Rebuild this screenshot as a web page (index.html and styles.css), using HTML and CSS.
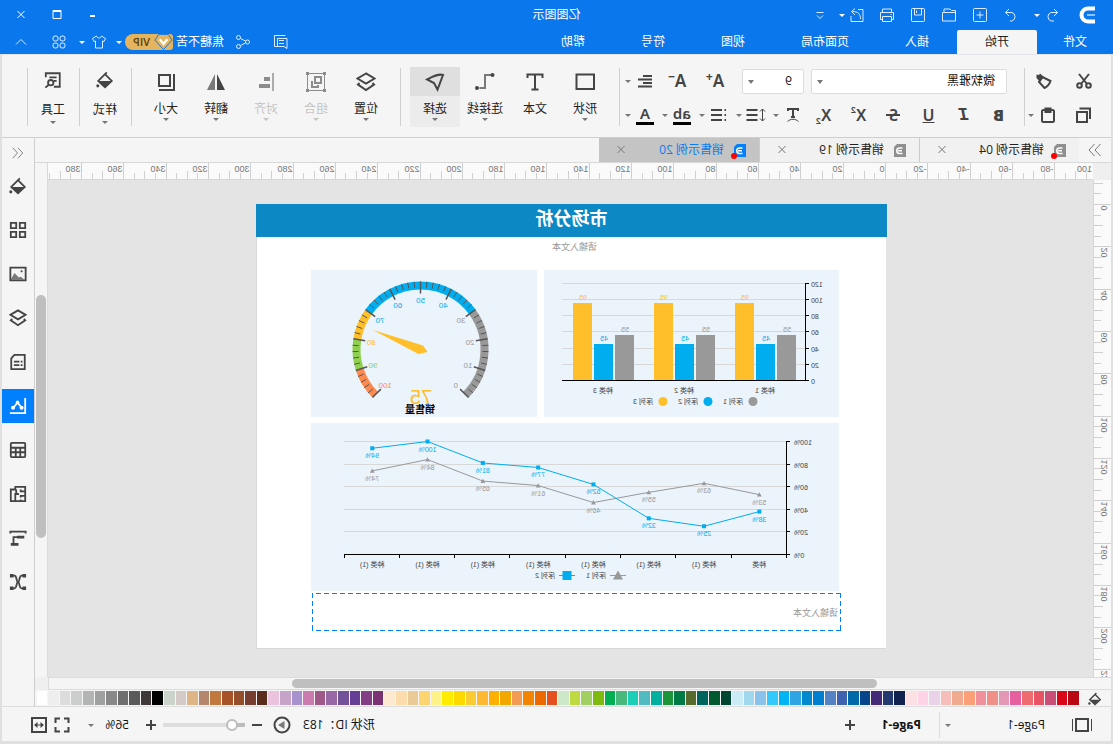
FILE: index.html
```html
<!DOCTYPE html>
<html lang="zh-CN">
<head>
<meta charset="utf-8">
<title>亿图图示</title>
<link rel="stylesheet" href="styles.css">
</head>
<body>
<svg class="sprite" aria-hidden="true">
  <symbol id="i-undo" viewBox="0 0 16 16"><path d="M6 2 2.500 5.500 6 9M2.500 5.500H9a4.500 4.500 0 0 1 0 8.500H6"/></symbol>
  <symbol id="i-redo" viewBox="0 0 16 16"><path d="M10 2l3.500 3.500L10 9M13.500 5.500H7a4.500 4.500 0 0 0 0 8.500h2"/></symbol>
  <symbol id="i-new" viewBox="0 0 16 16"><rect x="1.500" y="1.500" width="13" height="13" rx="1"/><path d="M8 4.500v7M4.500 8h7"/></symbol>
  <symbol id="i-open" viewBox="0 0 16 16"><path d="M1.500 14V3.500h4l1.500-1.500h6v3M1.500 7V5.500h13V14h-13"/></symbol>
  <symbol id="i-save" viewBox="0 0 16 16"><rect x="1.500" y="1.500" width="13" height="13" rx="1"/><path d="M4.500 2v6h7V2M9.500 3.500v2.500"/></symbol>
  <symbol id="i-print" viewBox="0 0 16 16"><path d="M3.500 5V2h9v3M3.500 12.500h-2V5.500h13v7h-2M3.500 9.500h9v5h-9zM3.500 7.500h1"/></symbol>
  <symbol id="i-export" viewBox="0 0 16 16"><path d="M7 2.500H2v12h12V9M4.500 12c0-5 2.500-7.500 8-7.500M10 1.500l3.500 3L10 8"/></symbol>
  <symbol id="i-custom" viewBox="0 0 16 16"><path d="M4.500 5.500h7M5 8.500l3 3 3-3"/></symbol>
  <symbol id="i-min" viewBox="0 0 16 16"><path class="w2" d="M6 9h5"/></symbol>
  <symbol id="i-max" viewBox="0 0 16 16"><path d="M4 3.500h8v8H4z"/><path class="w2" d="M4 4h8"/></symbol>
  <symbol id="i-close" viewBox="0 0 16 16"><path d="m4.500 4 7 7M11.500 4l-7 7"/></symbol>
  <symbol id="i-message" viewBox="0 0 16 16"><path d="M3.500 1.500h11v11H5l-3 2v-10h9.500v8M5 6.500h5M5 9.500h5"/></symbol>
  <symbol id="i-share" viewBox="0 0 16 16"><circle cx="12.500" cy="3.500" r="2"/><circle cx="3.500" cy="8" r="2"/><circle cx="12.500" cy="12.500" r="2"/><path d="m5.500 7 5-2.500M5.500 9l5 2.500"/></symbol>
  <symbol id="i-shirt" viewBox="0 0 16 16"><path d="M5.500 2 1.500 4.500l1.500 3 1.500-.5v7h7V7l1.500.5 1.500-3L10.500 2c-.5 1.500-1.500 2-2.500 2s-2-.5-2.500-2z"/></symbol>
  <symbol id="i-apps" viewBox="0 0 16 16"><rect x="2" y="2" width="5" height="5" rx="2"/><rect x="9" y="2" width="5" height="5" rx="2"/><rect x="2" y="9" width="5" height="5" rx="2"/><rect x="9" y="9" width="5" height="5" rx="2"/></symbol>
  <symbol id="i-up" viewBox="0 0 16 16"><path d="m3 10.500 5-5 5 5"/></symbol>
  <symbol id="i-cut" viewBox="0 0 16 16"><path class="w2" d="m3 1 8 10M13 1 5 11"/><circle class="w2" cx="3.500" cy="12.500" r="2.300"/><circle class="w2" cx="12.500" cy="12.500" r="2.300"/></symbol>
  <symbol id="i-painter" viewBox="0 0 16 16"><path class="w2" d="m1.500 8 8-4 3.500 5-5.500 6c-2-1-5-4-6-7z"/><path class="fill" d="M8 4 12 .500l1 1.500 2.500-.500v3.500L12 9z"/></symbol>
  <symbol id="i-copy" viewBox="0 0 16 16"><path class="w2" d="M5 5h10v10H5z"/><path class="w2" d="M2 12V1.500h10.500"/></symbol>
  <symbol id="i-paste" viewBox="0 0 16 16"><rect class="w2" x="2" y="3" width="12" height="12" rx="1.500"/><rect class="w2" x="5.500" y="1.500" width="5" height="3.500"/></symbol>
  <symbol id="i-align" viewBox="0 0 16 16"><path class="w2" d="M1 3h9M1 6.500h14M1 10h9M1 13.500h14"/></symbol>
  <symbol id="i-textfx" viewBox="0 0 16 16"><path class="w2" d="M3 4V2h10v2M8 2v8M6 10h4"/><path d="M2.500 14.500c3-3 8-3 11 0"/></symbol>
  <symbol id="i-spacing" viewBox="0 0 20 16"><path d="M3.500 2v12M1 4.500l2.500-2.500L6 4.500M1 11.500l2.500 2.500L6 11.500"/><path class="w2" d="M8.500 3h11M8.500 8h11M8.500 13h11"/></symbol>
  <symbol id="i-list" viewBox="0 0 16 16"><path class="w2" d="M5 3h11M5 8h11M5 13h11M1 3h1.500M1 8h1.500M1 13h1.500"/></symbol>
  <symbol id="i-rect" viewBox="0 0 20 20"><path class="w2" d="M1 2.500h17.500V17H1z"/></symbol>
  <symbol id="i-text" viewBox="0 0 20 20"><path class="w2" d="M2.500 6V2.500h15V6M10 2.500v15M6.500 17.500h7"/></symbol>
  <symbol id="i-connector" viewBox="0 0 20 20"><path class="soft w2" d="M4 3h6v13h5.500"/><circle class="fill" cx="2.500" cy="3" r="2"/><circle class="fill" cx="18" cy="16" r="2"/></symbol>
  <symbol id="i-select" viewBox="0 0 20 20"><path class="w2" d="M2 3c5-1.500 10 1.500 16 4.500L11 11 7.500 17.500z"/></symbol>
  <symbol id="i-layers" viewBox="0 0 20 20"><path class="w2" d="m10 1.500 8.500 5-8.500 5-8.500-5z"/><path class="w2" d="M3.500 11 2 12.500l8 5.500 8-5.500-1.500-1.500"/></symbol>
  <symbol id="i-group" viewBox="0 0 20 20"><path d="M1.500 1.500h17v17h-17z"/><path class="fill" d="M0 0h3v3H0zM17 0h3v3h-3zM0 17h3v3H0zM17 17h3v3h-3z"/><path class="w2" d="M5 5h6v6H5z"/><path class="w2" d="M14 9v6H8v-2"/></symbol>
  <symbol id="i-edge" viewBox="0 0 20 20"><path class="soft w2" d="M3 1v18"/><path class="w4" d="M6 7h6M6 14h11"/></symbol>
  <symbol id="i-flip" viewBox="0 0 20 20"><path class="fill" d="M9 2v16H1z"/><path class="softfill" d="M11 2v16h8z"/></symbol>
  <symbol id="i-size" viewBox="0 0 20 20"><path class="w2" d="M6 3h11v11H6z"/><path class="w2" d="M2 2v16h15"/></symbol>
  <symbol id="i-bucket" viewBox="0 0 20 20"><path class="w2" d="m9.500 4-7 7 7.500 7 7.500-7L8 1.500"/><path class="fill" d="M3.500 11h13L10 18z"/><circle class="fill" cx="18" cy="16.500" r="1.700"/></symbol>
  <symbol id="i-tools" viewBox="0 0 20 20"><path class="w2" d="M18 7V2.500H2.500v15H9M6 7h8M6 11h3"/><circle class="w2" cx="12.500" cy="13" r="3"/><path class="w2" d="m15 15.500 3.500 3"/></symbol>
  <symbol id="i-chevrons" viewBox="0 0 16 16"><path d="M7.500 2 2 8l5.500 6M13.500 2 8 8l5.500 6"/></symbol>
  <symbol id="i-chevrons-r" viewBox="0 0 16 16"><path d="M2.500 2 8 8l-5.500 6M8.500 2 14 8l-5.500 6"/></symbol>
  <symbol id="i-grid" viewBox="0 0 20 20"><path class="w2" d="M2 2h6v6H2zM12 2h6v6h-6zM2 12h6v6H2zM12 12h6v6h-6z"/></symbol>
  <symbol id="i-image" viewBox="0 0 20 20"><path class="w2" d="M1.500 3h17v14h-17z"/><path class="softfill" d="m3 16 4-3 2 1 5-5 4 7z"/><path class="fill" d="M5 6h2v2H5z"/></symbol>
  <symbol id="i-doc" viewBox="0 0 20 20"><path class="w2" d="M2.500 2H14l3.500 4v12h-15z"/><path class="w2" d="M5 9.500h2M8.500 9.500h6M5 13.500h2M8.500 13.500h6"/></symbol>
  <symbol id="i-chart" viewBox="0 0 20 20"><path class="w2" d="M2 1v17h17"/><path class="w2" d="m6 12 4.500-6 4.500 6"/><circle class="fill" cx="6" cy="12" r="2.200"/><circle class="fill" cx="10.500" cy="6" r="2"/><circle class="fill" cx="15.500" cy="12" r="2.200"/></symbol>
  <symbol id="i-table" viewBox="0 0 20 20"><rect class="w2" x="2" y="2" width="16" height="16" rx="1"/><path class="w2" d="M2 7.500h16M2 12.500h16M7.500 7.500V18M12.500 7.500V18"/></symbol>
  <symbol id="i-plan" viewBox="0 0 20 20"><path class="w2" d="M2 2h11v3h5v13H2zM2 7h5V5M2 12h5v2M7 18v-2M12 5v4M9 10h4v8M13 12h1"/></symbol>
  <symbol id="i-gantt" viewBox="0 0 20 20"><path class="w2" d="M1.500 5V3h17v2M15 16V9h-5"/><path class="w3" d="M3 9h8M9.500 17H18"/></symbol>
  <symbol id="i-mind" viewBox="0 0 20 20"><path class="w2" d="M4 3h2c3 0 2 7 4 7s1-7 4-7h2M4 17h2c3 0 2-7 4-7s1 7 4 7h2"/><path class="w4" d="M1 3h4M15 3h4M1 17h4M15 17h4"/></symbol>
  <symbol id="i-page" viewBox="0 0 20 16"><path class="w2" d="M4 2h12v12H4z"/><path d="M.500 2v12M19.500 2v12"/></symbol>
  <symbol id="i-full" viewBox="0 0 16 16"><path class="w2" d="M1.500 6V1.500H6M10 1.500h4.500V6M14.500 10v4.500H10M6 14.500H1.500V10"/></symbol>
  <symbol id="i-fit" viewBox="0 0 16 16"><path class="w2" d="M1 1h14v14H1z"/><path d="M4 8h8"/><path class="fill" d="M6.500 5v6L3 8zM9.500 5v6L13 8z"/></symbol>
  <symbol id="i-play" viewBox="0 0 18 18"><circle class="w2" cx="9" cy="9" r="7.500"/><path class="softfill" d="M6.500 5v8L13 9z"/></symbol>
</svg>

<div class="app">
  <header class="header">
    <div class="titlebar">
      <div class="quick">
        <svg class="logo" viewBox="0 0 24 20" role="img" aria-label="Edraw"><path class="logo-arc" d="M4 3.500h7a6.500 6.500 0 0 1 0 13H4"/><path class="logo-bar" d="M4 10h8"/></svg>
        <button class="q q-undo" aria-label="撤销"><svg class="ic"><use href="#i-undo"/></svg></button><i class="caret"></i>
        <button class="q q-redo" aria-label="重做"><svg class="ic"><use href="#i-redo"/></svg></button>
        <button class="q" aria-label="新建"><svg class="ic"><use href="#i-new"/></svg></button>
        <button class="q" aria-label="打开"><svg class="ic"><use href="#i-open"/></svg></button>
        <button class="q" aria-label="保存"><svg class="ic"><use href="#i-save"/></svg></button>
        <button class="q" aria-label="打印"><svg class="ic"><use href="#i-print"/></svg></button>
        <button class="q q-export" aria-label="导出"><svg class="ic"><use href="#i-export"/></svg></button><i class="caret"></i>
        <button class="q" aria-label="自定义"><svg class="ic"><use href="#i-custom"/></svg></button>
      </div>
      <div class="title">亿图图示</div>
      <div class="window-controls">
        <button aria-label="最小化"><svg class="ic"><use href="#i-min"/></svg></button>
        <button aria-label="最大化"><svg class="ic"><use href="#i-max"/></svg></button>
        <button aria-label="关闭"><svg class="ic"><use href="#i-close"/></svg></button>
      </div>
    </div>
    <div class="menubar">
      <nav class="menus">
        <button class="menu menu-file">文件</button><button class="menu active">开始</button><button class="menu">插入</button><button class="menu">页面布局</button><button class="menu">视图</button><button class="menu">符号</button><button class="menu">帮助</button>
      </nav>
      <div class="account">
        <button class="acc" aria-label="消息"><svg class="ic"><use href="#i-message"/></svg></button>
        <button class="acc" aria-label="分享"><svg class="ic"><use href="#i-share"/></svg></button>
        <span class="user">焦糖不苦</span>
        <span class="vip"><svg class="gem" viewBox="0 0 20 16"><path class="gem-body" d="M5 0h10l4 6-9 10L1 6z"/><path class="gem-v" d="m6 5 4 5 4-5"/></svg>VIP</span>
        <i class="caret caret-wide"></i>
        <button class="acc acc-shirt" aria-label="皮肤"><svg class="ic"><use href="#i-shirt"/></svg></button><i class="caret"></i>
        <button class="acc" aria-label="应用"><svg class="ic"><use href="#i-apps"/></svg></button>
        <button class="acc" aria-label="收起"><svg class="ic"><use href="#i-up"/></svg></button>
      </div>
    </div>
  </header>

  <div class="frame">
    <div class="ribbon">
      <div class="clip">
        <button aria-label="剪切"><svg class="ic"><use href="#i-cut"/></svg></button>
        <button aria-label="格式刷"><svg class="ic"><use href="#i-painter"/></svg></button>
        <button aria-label="复制"><svg class="ic"><use href="#i-copy"/></svg></button>
        <button class="split" aria-label="粘贴"><svg class="ic"><use href="#i-paste"/></svg><i class="caret"></i></button>
      </div>
      <i class="sep sep-clip"></i>
      <div class="fontgroup">
        <div class="frow frow-top">
          <span class="pick pick-font"><select aria-label="字体"><option>微软雅黑</option></select></span>
          <span class="pick pick-size"><select aria-label="字号"><option>9</option></select></span>
          <button class="grow" aria-label="增大字号">A<sup>+</sup></button>
          <button class="grow" aria-label="减小字号">A<sup>−</sup></button>
          <button class="split" aria-label="对齐方式"><svg class="ic"><use href="#i-align"/></svg><i class="caret"></i></button>
        </div>
        <div class="frow">
          <button class="glyph"><b>B</b></button><button class="glyph glyph-i"><i>I</i></button><button class="glyph"><u>U</u></button><button class="glyph glyph-s">S</button><button class="glyph">X<sup>2</sup></button><button class="glyph">X<sub>2</sub></button>
          <div class="splits">
            <button class="split" aria-label="文字效果"><svg class="ic"><use href="#i-textfx"/></svg><i class="caret"></i></button>
            <button class="split" aria-label="行距"><svg class="ic ic-wide"><use href="#i-spacing"/></svg><i class="caret"></i></button>
            <button class="split" aria-label="项目符号"><svg class="ic"><use href="#i-list"/></svg><i class="caret"></i></button>
            <button class="split"><span class="inked">ab</span><i class="caret"></i></button>
            <button class="split"><span class="inked">A</span><i class="caret"></i></button>
          </div>
        </div>
      </div>
      <i class="sep"></i>
      <button class="big"><span class="bigicon"><svg><use href="#i-rect"/></svg></span>形状<i class="caret"></i></button>
      <button class="big"><span class="bigicon"><svg><use href="#i-text"/></svg></span>文本</button>
      <button class="big"><span class="bigicon"><svg><use href="#i-connector"/></svg></span>连接线<i class="caret"></i></button>
      <button class="big on"><span class="bigicon"><svg><use href="#i-select"/></svg></span>选择<i class="caret"></i></button>
      <i class="sep"></i>
      <button class="big"><span class="bigicon"><svg><use href="#i-layers"/></svg></span>位置<i class="caret"></i></button>
      <button class="big" disabled><span class="bigicon"><svg><use href="#i-group"/></svg></span>组合<i class="caret"></i></button>
      <button class="big" disabled><span class="bigicon"><svg><use href="#i-edge"/></svg></span>对齐<i class="caret"></i></button>
      <button class="big"><span class="bigicon"><svg><use href="#i-flip"/></svg></span>翻转<i class="caret"></i></button>
      <button class="big"><span class="bigicon"><svg><use href="#i-size"/></svg></span>大小<i class="caret"></i></button>
      <i class="sep sep-half"></i>
      <button class="big narrow"><span class="bigicon"><svg><use href="#i-bucket"/></svg></span>样式<i class="caret"></i></button>
      <i class="sep sep-tight"></i>
      <button class="big narrow"><span class="bigicon"><svg><use href="#i-tools"/></svg></span>工具<i class="caret"></i></button>
      <i class="sep sep-tight"></i>
    </div>

    <div class="main">
      <div class="work">
        <div class="tabs">
          <button class="collapse" aria-label="展开"><svg class="ic"><use href="#i-chevrons-r"/></svg></button>
          <div class="tab"><span class="file changed"><svg viewBox="0 0 12 13"><path class="file-bg" d="M0 0h9l3 3v10H0z"/><path class="file-e" d="M3.500 4h3a2.500 2.500 0 0 1 0 5.500h-3M4 6.800h4"/></svg></span>销售示例 04<button aria-label="关闭"><svg class="ic"><use href="#i-close"/></svg></button></div>
          <div class="tab"><span class="file"><svg viewBox="0 0 12 13"><path class="file-bg" d="M0 0h9l3 3v10H0z"/><path class="file-e" d="M3.500 4h3a2.500 2.500 0 0 1 0 5.500h-3M4 6.800h4"/></svg></span>销售示例 19<button aria-label="关闭"><svg class="ic"><use href="#i-close"/></svg></button></div>
          <div class="tab current"><span class="file changed"><svg viewBox="0 0 12 13"><path class="file-bg" d="M0 0h9l3 3v10H0z"/><path class="file-e" d="M3.500 4h3a2.500 2.500 0 0 1 0 5.500h-3M4 6.800h4"/></svg></span>销售示例 20<button aria-label="关闭"><svg class="ic"><use href="#i-close"/></svg></button></div>
        </div>
        <div class="stage">
          <div class="corner"></div>
          <svg class="ruler ruler-h" id="ruler-h"></svg>
          <div class="corner corner-r"></div>
          <svg class="ruler ruler-v" id="ruler-v"></svg>
          <div class="canvas">
            <div class="page">
              <h1 class="band">市场分析</h1>
              <p class="hint">请输入文本</p>
              <div class="panels">
                <svg class="panel" id="bars" width="295" height="147"></svg>
                <svg class="panel" id="gauge" width="226" height="147"></svg>
                <svg class="panel" id="lines" width="528" height="168"></svg>
              </div>
              <div class="textbox">请输入文本</div>
            </div>
          </div>
          <div class="vscroll"><i></i></div>
          <div class="hscroll"><i></i></div>
          <div class="corner corner-b"></div>
        </div>
        <div class="palette"><svg class="bucket"><use href="#i-bucket"/></svg><div class="swatches" id="swatches"></div></div>
      </div>
      <aside class="side">
        <button class="side-top" aria-label="展开面板"><svg class="ic"><use href="#i-chevrons"/></svg></button>
        <button aria-label="填充"><svg><use href="#i-bucket"/></svg></button>
        <button aria-label="符号"><svg><use href="#i-grid"/></svg></button>
        <button aria-label="图片"><svg><use href="#i-image"/></svg></button>
        <button aria-label="图层"><svg><use href="#i-layers"/></svg></button>
        <button aria-label="注释"><svg><use href="#i-doc"/></svg></button>
        <button class="on" aria-label="图表"><svg><use href="#i-chart"/></svg></button>
        <button aria-label="表格"><svg><use href="#i-table"/></svg></button>
        <button aria-label="平面图"><svg><use href="#i-plan"/></svg></button>
        <button aria-label="甘特图"><svg><use href="#i-gantt"/></svg></button>
        <button aria-label="思维导图"><svg><use href="#i-mind"/></svg></button>
      </aside>
    </div>

    <footer class="status">
      <button class="st-page" aria-label="页面视图"><svg><use href="#i-page"/></svg></button>
      <button class="page-pick"><span>Page-1</span><i class="caret"></i></button>
      <button class="page-tab">Page-1</button>
      <button class="plus" aria-label="添加页面"></button>
      <span class="grow-space"></span>
      <span class="shape-id">形状 ID：183</span>
      <button class="st-play" aria-label="播放"><svg><use href="#i-play"/></svg></button>
      <button class="minus" aria-label="缩小"></button>
      <input class="zoom" type="range" min="0" max="100" value="10" aria-label="缩放">
      <button class="plus plus-zoom" aria-label="放大"></button>
      <button class="percent"><span>56%</span><i class="caret"></i></button>
      <button class="st-view" aria-label="全屏"><svg class="ic"><use href="#i-full"/></svg></button>
      <button class="st-view" aria-label="适合宽度"><svg class="ic"><use href="#i-fit"/></svg></button>
    </footer>
  </div>
</div>
<script src="app.js"></script>
</body>
</html>
```

FILE: styles.css
```css
* { box-sizing: border-box; }
body { margin: 0; background: #e0e0e0; overflow: hidden; }
button { border: 0; padding: 0; margin: 0; background: none; color: inherit; font: inherit; display: flex; align-items: center; justify-content: center; flex: none; }
svg { fill: none; stroke: currentColor; stroke-width: 1; flex: none; }
svg text { stroke: none; fill: #444; }
.sprite { position: absolute; width: 0; height: 0; }
.ic { width: 16px; height: 16px; }
.ic-wide { width: 20px; }
.w2 { stroke-width: 2; }
.w3 { stroke-width: 3; }
.w4 { stroke-width: 4; }
.fill { fill: currentColor; stroke: none; }
.softfill { fill: currentColor; fill-opacity: .7; stroke: none; }
.soft { stroke-opacity: .7; }

.app { height: 100vh; display: flex; flex-direction: column; transform: scaleX(-1); font: 12px/16px "Open Sans", "Noto Sans CJK SC", sans-serif; color: #222; }
.caret { width: 8px; flex: none; display: flex; justify-content: center; }
.caret::after { content: ""; border: 3px solid transparent; border-top-color: currentColor; border-bottom: 0; }

.header { background: #0a77ec; color: #fff; flex: none; }
.titlebar { height: 30px; display: grid; grid-template-columns: 1fr auto 1fr; align-items: center; }
.quick { display: flex; align-items: center; padding-left: 14px; }
.quick .ic, .account .ic { stroke-opacity: .85; }
.logo { width: 24px; height: 20px; }
.logo-arc { stroke: #fff; stroke-width: 4; }
.logo-bar { stroke: #8cc4ff; stroke-width: 2; }
.q { width: 31px; height: 24px; }
.q:last-child { width: 22px; margin-left: 7px; }
.q-undo { width: 22px; margin-left: 12px; }
.q-redo { margin-left: 6px; }
.q-export { width: 26px; padding-left: 3px; }
.window-controls { display: flex; justify-content: flex-end; padding-right: 3px; }
.window-controls button { width: 36px; height: 26px; }
.menubar { height: 24px; display: flex; justify-content: space-between; }
.menus { display: flex; }
.menu { padding: 0 28px; }
.menu-file { padding: 0 26px 0 24px; margin-left: 2px; }
.menu.active { background: #f5f5f5; color: #222; border-radius: 2px 2px 0 0; }
.account { display: flex; align-items: center; padding-right: 2px; }
.acc { width: 38px; height: 22px; }
.acc-shirt { width: 27px; }
.vip { display: flex; align-items: center; gap: 4px; width: 48px; height: 16px; margin-left: 3px; border-radius: 3px 8px 8px 3px; background: #e5b45f; color: #5c3d0c; font-size: 11px; font-weight: 600; }
.gem { width: 19px; height: 16px; }
.gem-body { fill: #e5b45f; stroke: #0a77ec; }
.gem-v { stroke: #fff; stroke-width: 2.5; }
.caret-wide { width: 12px; }

.frame { flex: 1; min-height: 0; display: flex; flex-direction: column; border: solid #e0e0e0; border-width: 0 2px 3px; background: #f5f5f5; }
.ribbon { height: 84px; flex: none; display: flex; align-items: flex-start; padding: 9px 0 0 10px; border-top: 1px solid #e3e6ea; border-bottom: 1px solid #cfcfcf; color: #444; }
.clip { display: grid; grid-template-columns: 34px 36px; column-gap: 6px; grid-auto-rows: 34px; }
.clip button { width: 34px; }
.split { width: 34px; height: 34px; justify-content: flex-end; }
.split .ic { margin: 0 5px; }
.split .ic-wide { margin: 0 3px; }
.split .caret { color: #777; }
.sep { width: 1px; height: 58px; margin: 4px 9px 0; background: #d0d0d0; flex: none; }
.sep-clip { margin: 4px 0 0; }
.sep-half { margin: 4px 2px 0 9px; }
.sep-tight { margin: 4px 2px 0 1px; }
.fontgroup { padding: 0 0 0 8px; width: 395px; flex: none; }
.frow { display: flex; align-items: center; height: 34px; }
.frow-top { padding-left: 9px; }
.pick { position: relative; flex: none; height: 25px; }
.pick-font { width: 196px; }
.pick-size { width: 62px; margin: 0 8px 0 7px; }
.pick select { width: 100%; height: 100%; appearance: none; border: 1px solid #dcdcdc; border-radius: 2px; background: #fff; padding: 0 11px; font: inherit; color: #111; }
.pick::after { content: ""; position: absolute; right: 6px; top: 11px; border: 3px solid transparent; border-top: 4px solid #777; border-bottom: 0; }
.grow, .glyph { font: 600 16px/20px "Noto Sans", sans-serif; align-items: center; }
.grow { width: 38px; height: 34px; font-size: 17px; }
.glyph { width: 35px; height: 34px; }
.glyph-i { font-family: "Liberation Mono", monospace; font-weight: 700; font-size: 18px; }
.glyph-s { background: linear-gradient(#444, #444) center / 14px 2px no-repeat; }
.grow sup { font-size: 12px; line-height: 8px; align-self: flex-start; margin-top: 9px; font-weight: 700; }
.glyph sup, .glyph sub { font-size: 9px; line-height: 9px; font-weight: 600; }
.glyph sup { align-self: flex-start; margin-top: 7px; }
.glyph sub { align-self: flex-end; margin-bottom: 7px; }
.splits { display: flex; gap: 3px; }
.inked { width: 18px; height: 20px; margin: 0 4px; font: 600 15px/17px "Noto Sans", sans-serif; border-bottom: 3px solid #000; text-align: center; }
.big { width: 50px; height: 60px; margin-top: 3px; flex-direction: column; justify-content: flex-start; border-radius: 2px; color: #222; line-height: 18px; white-space: nowrap; padding: 0; }
.bigicon { width: 100%; height: 29px; display: flex; align-items: center; justify-content: center; color: #444; margin-bottom: 4px; flex: none; }
.bigicon svg { width: 20px; height: 20px; }
.big .caret { color: #777; }
.big.on { background: #ececec; }
.big.on .bigicon { background: #dfdfdf; }
.big:disabled, .big:disabled .caret { color: #c4c4c4; }
.big:disabled .bigicon { color: #8c8c8c; }
.narrow { width: 48px; margin-top: 1px; }
.narrow .bigicon { margin-bottom: 7px; }
.narrow .bigicon svg { width: 18px; height: 18px; }
.narrow .caret { margin-top: 2px; }

.main { flex: 1; min-height: 0; display: flex; }
.work { flex: 1; min-width: 0; display: flex; flex-direction: column; }
.tabs { height: 24px; flex: none; display: flex; }
.collapse { width: 32px; height: 24px; color: #777; }
.tab { width: 160px; display: flex; align-items: center; padding: 0 14px 0 13px; background: #f1f1f1; border-right: 1px solid #ccc; line-height: 24px; }
.tab button { width: 16px; height: 16px; margin-left: auto; color: #777; }
.tab.current { background: #c4c4c4; color: #0a7cf0; border: 0; }
.file { position: relative; width: 12px; height: 13px; margin-right: 10px; color: #8f8f8f; display: flex; }
.current .file { color: #0080ff; }
.file svg { width: 12px; height: 13px; }
.file-bg { fill: currentColor; stroke: none; }
.file-e { stroke: #fff; stroke-width: 1.5; }
.changed::after { content: ""; position: absolute; left: 9px; top: 9px; width: 6px; height: 6px; border-radius: 50%; background: #f00; }

.stage { flex: 1; min-height: 0; display: grid; grid-template: 17px minmax(0, 1fr) 13px / 18px minmax(0, 1fr) 13px; border-top: 1px solid #d8d8d8; }
.corner { background: #efefef; }
.corner-r { background: #f5f5f5; border-left: 1px solid #d8d8d8; }
.corner-b { background: #efefef; }
.ruler { width: 100%; height: 100%; background: #fafafa; stroke: #cfcfcf; overflow: hidden; }
.ruler-h { border-bottom: 1px solid #d8d8d8; }
.ruler-v { border-right: 1px solid #d8d8d8; }
.ruler text { font: 9px "Liberation Sans", sans-serif; fill: #777; }
.canvas { background: #e4e4e4; overflow: hidden; padding: 24px 0 0 207px; }
.vscroll { border-left: 1px solid #dcdcdc; background: #f5f5f5; padding: 115px 1px 0; }
.vscroll i { display: block; height: 243px; border-radius: 5px; background: #bfbfbf; }
.hscroll { grid-column: 1 / 3; border: solid #dcdcdc; border-width: 1px 1px 1px 0; background: #f5f5f5; padding: 1px 243px 0 234px; }
.hscroll i { display: block; height: 9px; border-radius: 5px; background: #bfbfbf; }

.page { width: 630px; height: 445px; background: #fff; border: solid #d8d8d8; border-width: 0 1px 1px 0; }
.band { margin: 0 -1px; height: 33px; background: #0c88c4; color: #fff; font: bold 18px/31px "Liberation Serif", "Noto Sans CJK SC", sans-serif; text-align: center; }
.hint { margin: 0; height: 33px; padding: 2px 6px 0 0; text-align: center; font-size: 9px; color: #999; }
.panels { display: flex; flex-wrap: wrap; gap: 6px 7px; margin-left: 47px; width: 528px; }
.panel { background: #ebf3fb; }
.panel text { font-family: "Liberation Sans", "Noto Sans CJK SC", sans-serif; font-size: 7px; }
.end { text-anchor: end; }
.mid { text-anchor: middle; }
.gridline { stroke: #d8d8d8; }
.axis { stroke: #000; }
.panel .t-gray { fill: #999; }
.panel .t-blue { fill: #00aeef; }
.panel .t-yellow { fill: #ffbf2a; }
.panel .t-green { fill: #8fd14f; }
.panel .t-orange { fill: #ff8a50; }
.panel .dial { font-size: 8px; }
.panel .value { font-size: 20px; fill: #ffbf2a; }
.panel .caption { font-size: 10px; font-weight: bold; fill: #000; }
.textbox { --across: repeating-linear-gradient(90deg, #0080ff 0 5px, transparent 5px 8px); --down: repeating-linear-gradient(#0080ff 0 5px, transparent 5px 8px); width: 529px; height: 38px; margin: 2px 0 0 45px; padding-left: 3px; background: var(--across) top / 100% 1px no-repeat, var(--across) bottom / 100% 1px no-repeat, var(--down) left / 1px 100% no-repeat, var(--down) right / 1px 100% no-repeat; font-size: 9px; line-height: 40px; color: #999; }

.palette { height: 17px; flex: none; display: flex; padding: 1px 1px 1px 0; border-bottom: 1px solid #dcdcdc; color: #444; }
.bucket { width: 14px; height: 14px; margin: 1px 9px; }
.swatches { flex: 1; display: flex; gap: 1px; }
.swatch { flex: 1; height: 14px; }

.side { width: 33px; flex: none; border-left: 1px solid #cfcfcf; border-bottom: 1px solid #dcdcdc; display: flex; flex-direction: column; gap: 10px; color: #444; }
.side button { height: 34px; width: 32px; }
.side svg { width: 18px; height: 18px; }
.side .side-top { height: 21px; padding-top: 8px; color: #777; }
.side .side-top svg { width: 15px; height: 14px; }
.side .on { background: #0080ff; color: #fff; }

.status { height: 34px; flex: none; display: flex; align-items: center; padding: 2px 29px 0 18px; color: #111; }
.status svg { color: #444; }
.st-page { width: 22px; }
.st-page svg { width: 22px; height: 16px; }
.page-pick { margin-left: 26px; width: 106px; height: 26px; justify-content: space-between; border-right: 1px solid #dcdcdc; padding-right: 4px; }
.page-tab { font-weight: 700; margin-left: 18px; }
.plus, .minus { width: 10px; height: 10px; background: linear-gradient(#444, #444) center / 10px 2px no-repeat; }
.plus { background: linear-gradient(#444, #444) center / 10px 2px no-repeat, linear-gradient(#444, #444) center / 2px 10px no-repeat; margin-left: 27px; }
.plus-zoom { margin-left: 7px; }
.grow-space { flex: 1; }
.page-pick .caret, .percent .caret { color: #777; }
.st-play { margin-left: 12px; }
.st-play svg { width: 18px; height: 18px; }
.minus { margin-left: 11px; }
.zoom { appearance: none; width: 82px; height: 14px; margin: 0 0 0 7px; background: linear-gradient(90deg, #bdbdbd 14px, #dedede 14px) center / 100% 4px no-repeat; }
.zoom::-webkit-slider-thumb { appearance: none; width: 12px; height: 12px; border-radius: 50%; border: 2px solid #bdbdbd; background: #fff; }
.percent { margin-left: 17px; width: 42px; justify-content: space-between; }
.st-view { margin-left: 17px; }
.st-view + .st-view { margin-left: 7px; }
```

FILE: app.js
```js
const el = (id) => document.getElementById(id);
const text = (x, y, s, cls) => `<text x="${x}" y="${y}" class="${cls || ''}">${s}</text>`;
const line = (x1, y1, x2, y2, cls) => `<path class="${cls || ''}" d="M${x1} ${y1}L${x2} ${y2}"/>`;
const STEP = 2.1158;

function drawRulers() {
  let h = text(1, 9, 100), v = '';
  for (let n = -100; n <= 400; n += 5) {
    const x = Math.round(207 + n * STEP) + 0.5;
    const y = Math.round(24 + n * STEP) + 0.5;
    const len = n % 20 === 0 ? 17 : n % 10 === 0 ? 9 : 7;
    h += line(x, 17, x, 17 - len);
    v += line(17, y, 17 - len, y);
    if (n % 20 === 0) {
      if (n > -100 && n < 400) h += text(x + 1, 9, n);
      if (n >= 0 && n <= 220) v += `<text transform="translate(4 ${y + 1}) rotate(90)">${n}</text>`;
    }
  }
  el('ruler-h').innerHTML = h;
  el('ruler-v').innerHTML = v;
}

function drawBars() {
  let s = '';
  for (let n = 0; n <= 120; n += 20) {
    const y = Math.round(110 - n * 0.81) + 0.5;
    s += line(33, y, 277, y, n ? 'gridline' : 'axis') + line(30, y, 33, y, 'axis') + text(28, y + 3, n, 'end');
  }
  const series = [[55, '#999', 't-gray'], [45, '#00aeef', 't-blue'], [95, '#ffbf2a', 't-yellow']];
  for (let g = 0; g < 3; g++) {
    series.forEach(([n, color, cls], i) => {
      const x = 43 + g * 81 + i * 21;
      const h = Math.round(n * 0.81);
      s += `<rect x="${x}" y="${110 - h}" width="19" height="${h}" fill="${color}" stroke="none"/>`;
      s += text(x + 9, 107 - h, n, 'mid ' + cls);
    });
    s += text(74 + g * 81, 123, '种类 ' + (g + 1), 'mid');
    s += `<circle cx="${86 + g * 45}" cy="131.500" r="4.500" fill="${series[g][1]}" stroke="none"/>`;
    s += text(96 + g * 45, 134, '序列 ' + (g + 1));
  }
  s += line(33.5, 13, 33.5, 111, 'axis') + line(33, 110.5, 277, 110.5, 'axis');
  el('bars').innerHTML = s;
}

function drawGauge() {
  const cx = 116.5, cy = 79.5;
  const at = (n, r) => {
    const a = (225 - n * 2.7) * Math.PI / 180;
    return [cx + r * Math.cos(a), cy - r * Math.sin(a)];
  };
  const bands = [[0, 30, '#999', 't-gray'], [30, 70, '#00aeef', 't-blue'], [70, 80, '#ffbf2a', 't-yellow'], [80, 90, '#8fd14f', 't-green'], [90, 100, '#ff8a50', 't-orange']];
  let s = '';
  bands.forEach(([a, b, color]) => {
    s += `<path d="M${at(a, 64)}A64 64 0 0 1 ${at(b, 64)}" stroke="${color}" stroke-width="8"/>`;
  });
  for (let n = 0; n <= 100; n += 2) {
    const major = n % 10 === 0;
    s += `<path d="M${at(n, 68)}L${at(n, major ? 56 : 62)}" stroke="#555" stroke-width="${major ? 1.5 : 1}"/>`;
    if (major) {
      const [x, y] = at(n, 50);
      const band = bands.find((b) => n <= b[1]);
      s += text(x, y + 3, n, 'mid dial ' + band[3]);
    }
  }
  s += '<path d="M164 60L114 75.500L109.500 82L118.500 84Z" fill="#ffbf2a" stroke="none"/>';
  s += text(116, 134, '75', 'mid value') + text(117, 143, '销售量', 'mid caption');
  el('gauge').innerHTML = s;
}

function drawLines() {
  const gap = 55.3;
  const px = (i) => 52 + gap * (i + 0.5);
  const py = (n) => 131.5 - n * 1.13;
  let s = '';
  for (let n = 0; n <= 100; n += 20) {
    const y = Math.round(py(n) - 0.5) + 0.5;
    s += line(52, y, 495, y, n ? 'gridline' : 'axis') + line(49, y, 52, y, 'axis') + text(45, y + 3, n + '%', 'end');
  }
  for (let i = 0; i <= 8; i++) {
    const x = Math.round(52 + gap * i) + 0.5;
    s += line(x, 131, x, 135, 'axis');
    if (i < 8) s += text(px(i), 144, i ? '种类 (1)' : '种类', 'mid');
  }
  s += line(52.5, 18, 52.5, 132, 'axis');
  const tri = (x, y, r) => `<path d="M${x} ${y - r}l${r} ${r * 1.8}h${-2 * r}z" fill="#999" stroke="none"/>`;
  const sq = (x, y, r) => `<rect x="${x - r}" y="${y - r}" width="${2 * r}" height="${2 * r}" fill="#00aeef" stroke="none"/>`;
  [[[53, 63, 55, 46, 61, 65, 84, 74], '#999', 't-gray', tri, 2.4], [[38, 25, 32, 62, 77, 81, 100, 94], '#00aeef', 't-blue', sq, 2]].forEach(([d, color, cls, mark, r]) => {
    s += `<polyline points="${d.map((n, i) => px(i) + ',' + py(n)).join(' ')}" stroke="${color}"/>`;
    d.forEach((n, i) => { s += mark(px(i), py(n), r) + text(px(i), py(n) + 10, n + '%', 'mid ' + cls); });
  });
  s += '<path d="M213 152.500h16" stroke="#999"/>' + tri(221, 152.5, 5) + text(233, 155, '序列 1');
  s += '<path d="M264 152.500h16" stroke="#00aeef"/>' + sq(272, 152.5, 4.5) + text(284, 155, '序列 2');
  el('lines').innerHTML = s;
}

function drawPalette() {
  const colors = 'b80812 d90718 c94f77 e95464 ee6b70 e660a0 e397b4 ef8f88 f0909c ff9f78 f0aa90 f6bdb9 ead3e8 fdd3e5 fde0e4 10224f 243970 432b7a 06458b 0069a7 4060b0 5482c4 007fd0 0089cd 2fa6e3 00b4f4 33c9fc 8ac2ec 9fd8ef cdeaf7 00452f 00592f 00645e 566b2c 007a45 1c9439 00af9d 50bcc2 1acfb5 48b87b 00af52 7eb90f a2cf62 bfd942 cde7c9 e55020 ec6900 f38400 f39b54 f1a700 feb000 feb832 facb33 fdd900 ffec00 fcf288 fdd570 eacb97 fcdcaa fde9d0 7b3273 833d84 673e95 725399 9768a3 9e5989 cc7baf a892ce c6a4c9 ecc3dd 5b2b1c 763d30 944e2a a75327 c1783f b4866c ddb587 d4cbc6 cad4cb 000000 3e3838 5a5959 6e6e6e 888888 9fa1a0 b3b5b4 cccecd dcdcdc eeeeee ffffff';
  el('swatches').innerHTML = colors.split(' ').map((c) => `<span class="swatch" style="background:#${c}"></span>`).join('');
}

drawRulers();
drawBars();
drawGauge();
drawLines();
drawPalette();
```
